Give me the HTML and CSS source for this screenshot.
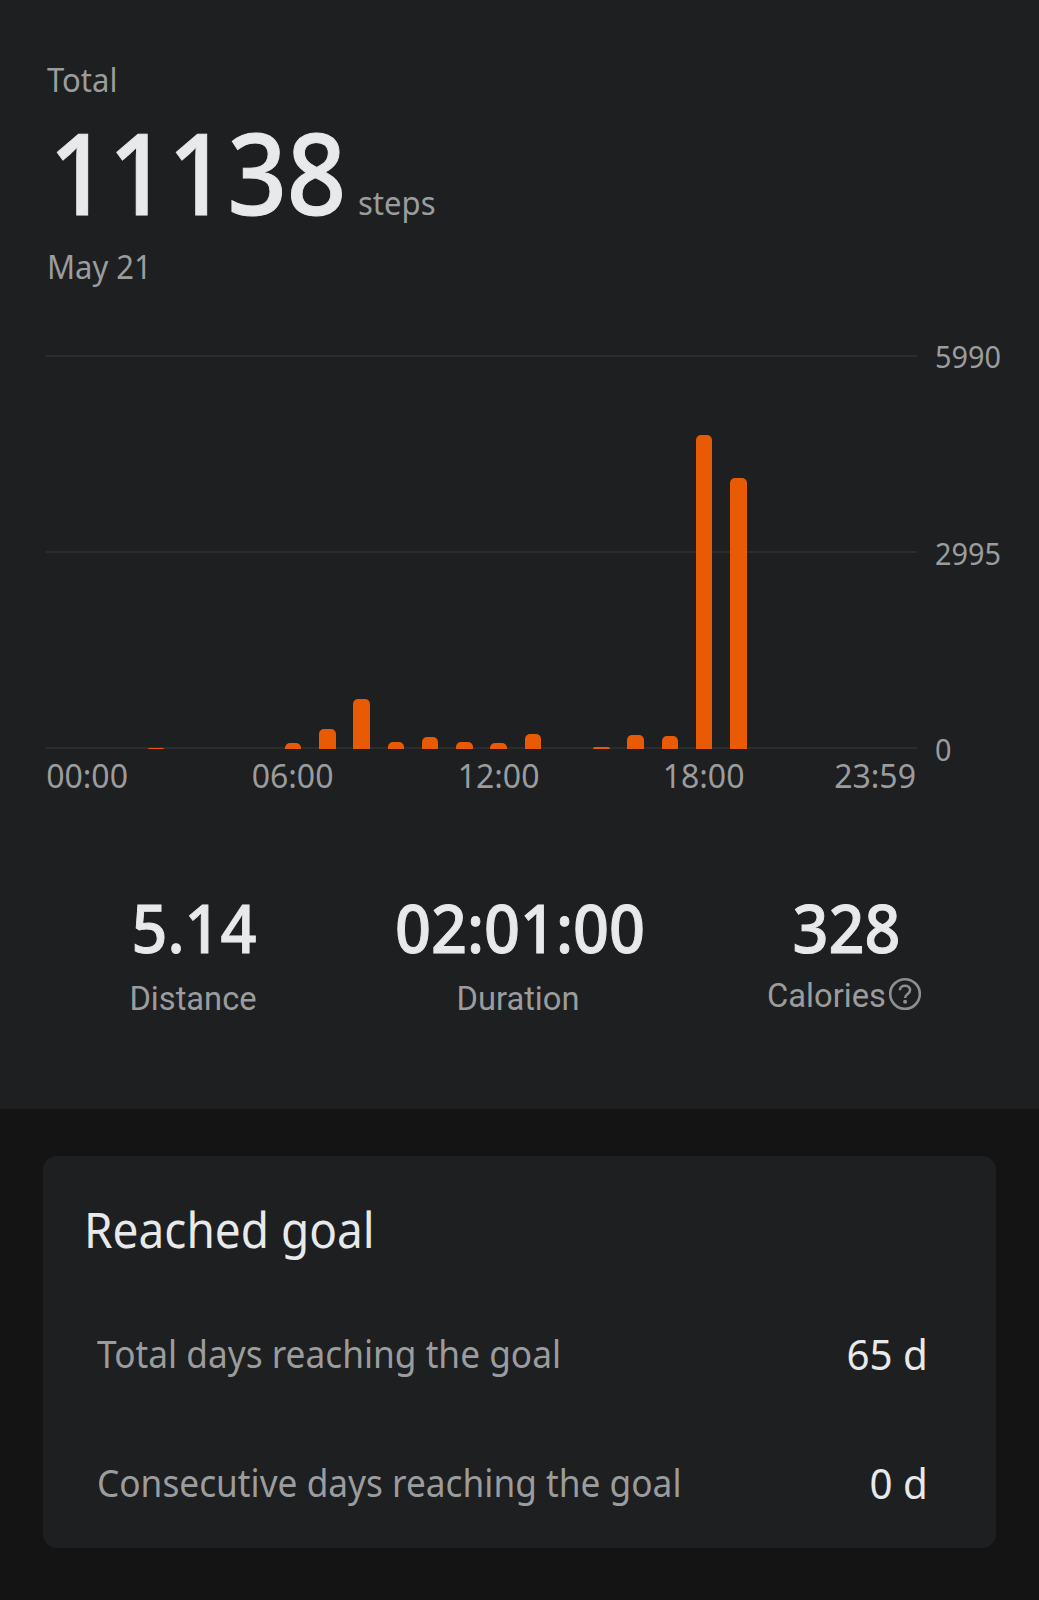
FILE: index.html
```
<!DOCTYPE html>
<html lang="en">
<head>
	<title>Steps</title>
	<meta charset="utf-8">
	<link rel="stylesheet" href="styles.css">
</head>
<body>
<div class="summary">
	<p class="label">Total</p>
	<div class="total"><span class="num">11138</span><span class="unit">steps</span></div>
	<p class="label date">May 21</p>
	<div class="chart">
		<div class="plot">
			<div class="bars" id="bars"></div>
		</div>
		<div class="y-axis">
			<span>5990</span>
			<span>2995</span>
			<span>0</span>
		</div>
	</div>
	<div class="x-axis">
		<span>00:00</span>
		<span>06:00</span>
		<span>12:00</span>
		<span>18:00</span>
		<span>23:59</span>
	</div>
	<div class="stats">
		<div class="stat distance">
			<strong>5.14</strong>
			<p>Distance</p>
		</div>
		<div class="stat duration">
			<strong>02:01:00</strong>
			<p>Duration</p>
		</div>
		<div class="stat calories">
			<strong>328</strong>
			<p>Calories<svg class="help" viewBox="0 0 34 34" width="34" height="34">
				<circle cx="17" cy="17" r="14.8"/>
				<path d="M11.9 13.2c0-2.8 2.2-4.4 5.1-4.4s5.1 1.7 5.1 4.2c0 2.1-1.3 3.1-2.7 4.2-1.4 1-2.3 1.7-2.3 3.7"/>
				<circle class="dot" cx="17.1" cy="24.8" r="2"/>
			</svg></p>
		</div>
	</div>
</div>
<div class="card">
	<h2>Reached goal</h2>
	<div class="row"><span class="name">Total days reaching the goal</span><span class="value">65 d</span></div>
	<div class="row"><span class="name">Consecutive days reaching the goal</span><span class="value">0 d</span></div>
</div>
<script src="chart.js"></script>
</body>
</html>
```
FILE: chart.js
```
window.onload=function(){
	var max=5990;
	var plotH=392;
	// steps per hour, 0 to 23
	var steps=[0,0,20,0,0,0,99,313,764,107,183,107,92,237,0,38,214,199,4798,4140,0,0,0,0];
	var oBars=document.getElementById('bars');
	for(var i=0;i<steps.length;i++){
		var oCol=document.createElement('div');
		oCol.className='bar';
		oCol.style.height=(steps[i]/max*plotH)+'px';
		oBars.appendChild(oCol);
	}
}
```
FILE: styles.css
```
*{
	margin: 0;
	padding: 0;
	box-sizing: border-box;
}
body{
	background: #141414;
	color: #e8e9ea;
	font-family: "Noto Sans", "Liberation Sans", sans-serif;
	overflow: hidden;
}
.summary{
	height: 1109px;
	padding: 60px 39px 0 46px;
	background: #1e1f21;
}
/* narrow the letters a little, all from the left edge */
.label, .num, .unit, .y-axis span, .card h2, .name{
	transform: scaleX(0.94);
	transform-origin: left;
}
.label{
	height: 40px;
	padding-left: 1px;
	font-size: 33px;
	line-height: 40px;
	color: #9b9c9d;
}
.total{
	display: flex;
	align-items: baseline;
	height: 120px;
	margin-top: 11px;
	line-height: 120px;
}
.num{
	width: 311px;
	margin-left: 3px;
	font-size: 113px;
	font-weight: 500;
	-webkit-text-stroke: 1px #e8e9ea;
	transform: scaleX(0.92);
}
.unit{
	margin-left: -2px;
	font-size: 33px;
	color: #9b9c9d;
}
.date{
	margin-top: 16px;
}
.chart{
	display: flex;
	height: 394px;
	margin-top: 68px;
}
.plot{
	display: flex;
	flex: none;
	flex-direction: column;
	justify-content: flex-end;
	width: 871px;
	/* grid lines at the top, the middle and the bottom */
	background:
		linear-gradient(#2b2c2e,#2b2c2e) 0 0/100% 2px no-repeat,
		linear-gradient(#2b2c2e,#2b2c2e) 0 50%/100% 2px no-repeat,
		linear-gradient(#2b2c2e,#2b2c2e) 0 100%/100% 2px no-repeat;
}
.bars{
	display: grid;
	grid-template-columns: repeat(24,1fr);
	align-items: end;
	justify-items: center;
	padding: 0 24.5px;
}
.bar{
	width: 16.6px;
	background: #e85a04;
	border-radius: 5px 5px 0 0;
}
.y-axis{
	display: flex;
	flex-direction: column;
	justify-content: space-between;
	margin: -19px 0 -20px 18px;
	font-size: 31px;
	line-height: 40px;
	color: #9b9c9d;
}
.y-axis span{
	transform: scaleX(0.93);
}
.x-axis{
	display: grid;
	/* each label is centered under its hour */
	grid-template-columns: 82px repeat(3,205.5px) 171px;
	width: 871px;
	margin-top: 7px;
	font-size: 33px;
	line-height: 40px;
	color: #9b9c9d;
}
.x-axis span{
	text-align: right;
	transform: scaleX(0.97);
	transform-origin: right;
}
.x-axis span:first-child{
	margin-left: -3px;
}
.stats{
	display: flex;
	margin: 93px -39px 0 -46px;
}
.stat{
	text-align: center;
}
.stat strong{
	display: block;
	margin: 0 -22px 0 -18px;
	font-size: 68px;
	font-weight: 500;
	line-height: 75px;
	-webkit-text-stroke: 1px #e8e9ea;
	transform: scaleX(0.925);
}
.stat p{
	margin-top: 15px;
	font-family: Roboto, sans-serif;
	font-size: 32.7px;
	line-height: 40px;
	color: #9b9c9d;
}
.distance{
	width: 386px;
}
.distance strong{
	margin-right: -20px;
}
.duration{
	width: 264px;
}
.calories{
	width: 389px;
}
.calories p{
	display: flex;
	align-items: center;
	justify-content: center;
	margin-top: 12px;
}
.help{
	margin: -4px 0 0 2px;
	fill: none;
	stroke: #8d8e8f;
	stroke-width: 2.6;
}
.help .dot{
	fill: #8d8e8f;
	stroke: none;
}
.card{
	height: 392px;
	margin: 47px 43px 0;
	padding: 43px 68px 0 54px;
	background: #1e1f21;
	border-radius: 14px;
}
.card h2{
	margin-left: -13px;
	font-size: 48.5px;
	font-weight: 400;
	line-height: 60px;
	transform: scaleX(0.948);
}
.row{
	display: flex;
	align-items: center;
	justify-content: space-between;
	height: 60px;
	margin-top: 64px;
}
.row + .row{
	margin-top: 69px;
}
.name{
	font-size: 37.5px;
	color: #9b9c9d;
}
.value{
	font-size: 42px;
	transform: scaleX(0.96);
	transform-origin: right;
}
```
